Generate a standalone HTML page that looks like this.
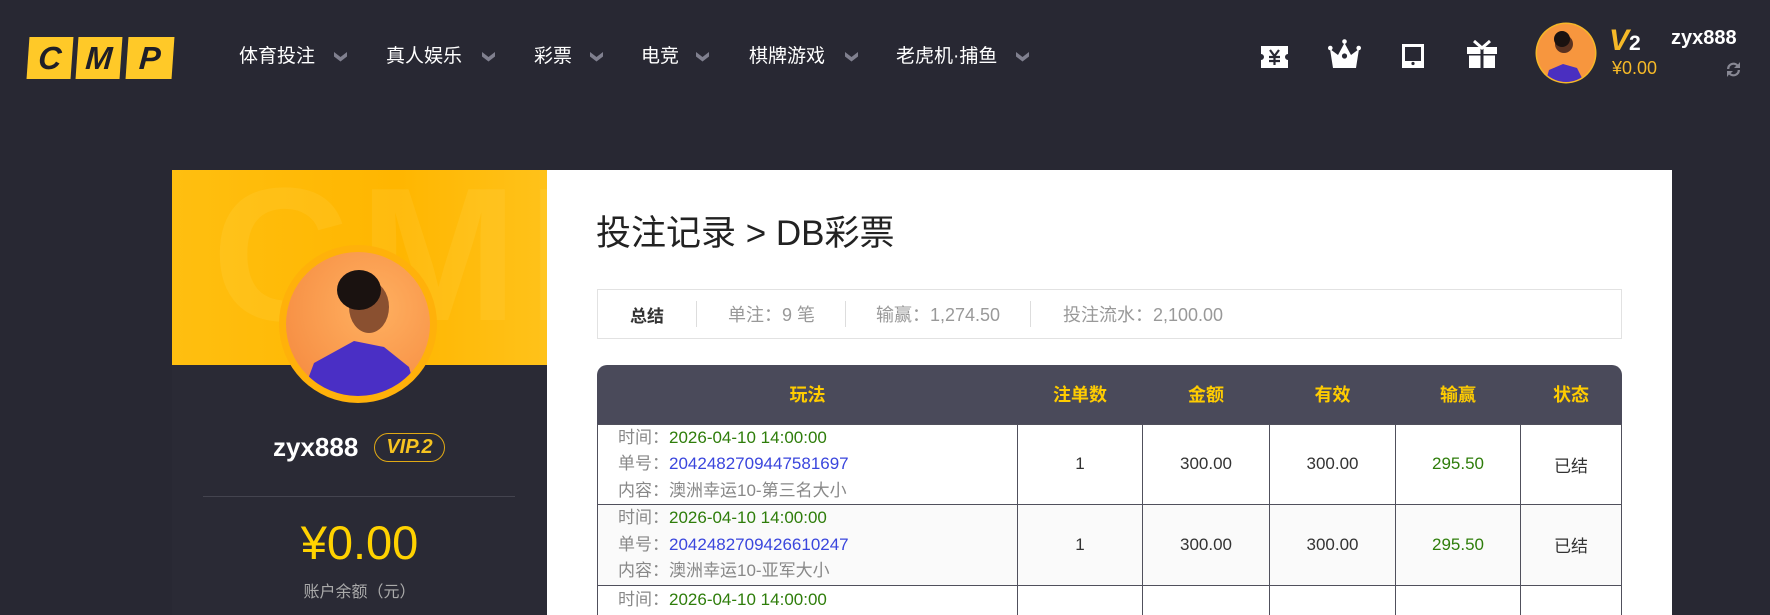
<!DOCTYPE html>
<html style="overflow:hidden"><head><meta charset="utf-8">
<style>
*{margin:0;padding:0;box-sizing:border-box}
html,body{width:1770px;height:615px;overflow:hidden}
body{background:#282833;font-family:"Liberation Sans","Noto Sans CJK SC",sans-serif}
#w{position:relative;width:1770px;height:615px;overflow:hidden}
.abs{position:absolute}
.logo .b{position:absolute;top:37px;height:42px;width:44px;background:#ffc928;transform:skewX(-4deg);color:#1e1e28;font:italic bold 32px/42px "Liberation Sans",sans-serif;text-align:center}
.nav{position:absolute;top:45px;color:#fff;font-size:19px;line-height:24px;white-space:nowrap}
.chev{position:absolute;top:52px;width:13px;height:10px}
.side{left:172px;top:170px;width:375px;height:445px;background:#2a2a35}
.banner{left:172px;top:170px;width:375px;height:195px;background:linear-gradient(90deg,#ffbf10,#ffb600 60%,#ffc21a);overflow:hidden}
.panel{left:547px;top:170px;width:1125px;height:445px;background:#fff}
#tw{position:absolute;left:597px;top:365px;width:1026px;height:250px;overflow:hidden}
table{border-collapse:collapse;width:1025px;font-size:17px}
th{color:#ffcc00;height:59px;font-weight:bold;font-size:18px}
td{border:1px solid #50505c;text-align:center;color:#333;height:80px;vertical-align:middle}
td.l{text-align:left;padding-left:20px;line-height:26.5px;color:#888}
.g{color:#2e7d0a}.bl{color:#3a46dd}
</style></head><body><div id="w">
<div class="logo"><div class="b" style="left:28px">C</div><div class="b" style="left:77px">M</div><div class="b" style="left:127px;width:46px">P</div></div>
<div class="nav" style="left:239px">体育投注</div>
<div class="nav" style="left:386px">真人娱乐</div>
<div class="nav" style="left:534px">彩票</div>
<div class="nav" style="left:641px">电竞</div>
<div class="nav" style="left:749px">棋牌游戏</div>
<div class="nav" style="left:896px">老虎机·捕鱼</div>
<svg class="chev" style="left:334px" viewBox="0 0 13 10"><path d="M0 0l6.5 5 6.5-5v4.5l-6.5 5-6.5-5z" fill="#80808f"/></svg>
<svg class="chev" style="left:482px" viewBox="0 0 13 10"><path d="M0 0l6.5 5 6.5-5v4.5l-6.5 5-6.5-5z" fill="#80808f"/></svg>
<svg class="chev" style="left:590px" viewBox="0 0 13 10"><path d="M0 0l6.5 5 6.5-5v4.5l-6.5 5-6.5-5z" fill="#80808f"/></svg>
<svg class="chev" style="left:696px" viewBox="0 0 13 10"><path d="M0 0l6.5 5 6.5-5v4.5l-6.5 5-6.5-5z" fill="#80808f"/></svg>
<svg class="chev" style="left:845px" viewBox="0 0 13 10"><path d="M0 0l6.5 5 6.5-5v4.5l-6.5 5-6.5-5z" fill="#80808f"/></svg>
<svg class="chev" style="left:1016px" viewBox="0 0 13 10"><path d="M0 0l6.5 5 6.5-5v4.5l-6.5 5-6.5-5z" fill="#80808f"/></svg>
<svg class="abs" style="left:1261px;top:46px" width="27" height="22" viewBox="0 0 27 22"><path d="M0 0h27v8a3 3 0 0 0 0 6v8H0v-8a3 3 0 0 0 0-6z" fill="#fff"/><path d="M9 4l4.5 6 4.5-6M8 11h11M8 15h11M13.5 10v9" stroke="#282833" stroke-width="2.2" fill="none"/></svg>
<svg class="abs" style="left:1328px;top:39px" width="33" height="29" viewBox="0 0 33 29"><circle cx="16.5" cy="2.5" r="2.3" fill="#fff"/><circle cx="2.3" cy="9" r="2.3" fill="#fff"/><circle cx="30.7" cy="9" r="2.3" fill="#fff"/><path d="M2 10l8 6 6.5-12 6.5 12 8-6-3 19H5z" fill="#fff"/><circle cx="16.5" cy="17" r="2.6" fill="#282833"/></svg>
<svg class="abs" style="left:1402px;top:44px" width="22" height="24" viewBox="0 0 22 24"><rect x="1.5" y="1.5" width="19" height="21" fill="none" stroke="#fff" stroke-width="3"/><rect x="1.5" y="17" width="19" height="6" fill="#fff"/><circle cx="11" cy="19.5" r="1.6" fill="#282833"/></svg>
<svg class="abs" style="left:1467px;top:40px" width="30" height="28" viewBox="0 0 30 28"><path d="M7 1l8 7 8-7" stroke="#fff" stroke-width="3" fill="none"/><rect x="0" y="7" width="13.5" height="7" fill="#fff"/><rect x="16.5" y="7" width="13.5" height="7" fill="#fff"/><rect x="2" y="15.5" width="11.5" height="12.5" fill="#fff"/><rect x="16.5" y="15.5" width="11.5" height="12.5" fill="#fff"/></svg>
<svg class="abs" style="left:1535px;top:22px" width="62" height="62" viewBox="0 0 62 62"><defs><clipPath id="c1"><circle cx="31" cy="31" r="29"/></clipPath></defs><circle cx="31" cy="31" r="30.5" fill="#f5b728"/><g clip-path="url(#c1)"><rect width="62" height="62" fill="#f7963e"/><circle cx="29" cy="22" r="9" fill="#5a3220"/><circle cx="27" cy="17" r="8" fill="#1a1210"/><path d="M10 62l4-14 14-6 14 4 8 16z" fill="#4a2fc0"/></g></svg>
<div class="abs" style="left:1609px;top:26px;color:#f6b928;font:bold 30px/30px 'Liberation Sans',sans-serif;font-style:italic">V<span style="color:#fff;font-size:21px;font-style:normal">2</span></div>
<div class="abs" style="left:1612px;top:58px;color:#f6b928;font-size:18px">¥0.00</div>
<div class="abs" style="left:1671px;top:27px;color:#fff;font:bold 20px 'Liberation Sans',sans-serif">zyx888</div>
<svg class="abs" style="left:1725px;top:61px" width="17" height="17" viewBox="0 0 17 17"><path d="M2 8a6.5 6.5 0 0 1 11-4.5L15 1v6H9l2.3-2.3A4.3 4.3 0 0 0 4.3 8zM15 9a6.5 6.5 0 0 1-11 4.5L2 16v-6h6l-2.3 2.3a4.3 4.3 0 0 0 7-3.3z" fill="#888894"/></svg>
<div class="abs side"></div>
<div class="abs banner"><div style="position:absolute;left:40px;top:-10px;font:bold 190px/190px 'Liberation Sans',sans-serif;color:rgba(255,230,120,0.12);letter-spacing:10px">CMP</div></div>
<svg class="abs" style="left:279px;top:245px" width="158" height="158" viewBox="0 0 158 158"><defs><clipPath id="c2"><circle cx="79" cy="79" r="72"/></clipPath><radialGradient id="rg" cx="0.6" cy="0.4" r="0.7"><stop offset="0" stop-color="#ffb060"/><stop offset="1" stop-color="#f58a40"/></radialGradient></defs><circle cx="79" cy="79" r="79" fill="#ffb10a"/><g clip-path="url(#c2)"><rect width="158" height="158" fill="url(#rg)"/><ellipse cx="90" cy="62" rx="20" ry="26" fill="#8a5030"/><ellipse cx="80" cy="45" rx="22" ry="20" fill="#1a1210"/><path d="M20 158l15-40 40-22 30 6 25 20 10 36z" fill="#4a2fc5"/></g></svg>
<div class="abs" style="left:273px;top:432px;color:#fff;font:bold 26px/30px 'Liberation Sans',sans-serif">zyx888</div>
<div class="abs" style="left:374px;top:433px;width:71px;height:29px;border:1.5px solid #e0a915;border-radius:15px;color:#f6c320;font:italic bold 20px/26px 'Liberation Sans',sans-serif;text-align:center">VIP.2</div>
<div class="abs" style="left:203px;top:496px;width:312px;height:1px;background:#44444f"></div>
<div class="abs" style="left:172px;width:375px;top:517px;text-align:center;color:#ffd200;font-size:47px;line-height:52px">¥0.00</div>
<div class="abs" style="left:172px;width:375px;top:578px;text-align:center;color:#aaa;font-size:16px">账户余额（元）</div>
<div class="abs panel"></div>
<div class="abs" style="left:596px;top:212px;font-size:35px;line-height:44px;color:#222">投注记录 &gt; DB彩票</div>
<div class="abs" style="left:597px;top:289px;width:1025px;height:50px;border:1px solid #e2e2e2"></div>
<div class="abs" style="left:630px;top:302px;font-size:17px;font-weight:bold;color:#333">总结</div>
<div class="abs" style="left:696px;top:301px;width:1px;height:26px;background:#ddd"></div>
<div class="abs" style="left:845px;top:301px;width:1px;height:26px;background:#ddd"></div>
<div class="abs" style="left:1030px;top:301px;width:1px;height:26px;background:#ddd"></div>
<div class="abs" style="left:728px;top:301px;font-size:18px;color:#999">单注：9 笔</div>
<div class="abs" style="left:876px;top:301px;font-size:18px;color:#999">输赢：1,274.50</div>
<div class="abs" style="left:1063px;top:301px;font-size:18px;color:#999">投注流水：2,100.00</div>
<div id="tw"><div style="position:absolute;left:0;top:0;width:1025px;height:59px;background:#4a4a5a;border-radius:10px 10px 0 0"></div>
<table style="position:relative">
<tr><th style="width:420px">玩法</th><th style="width:125px">注单数</th><th style="width:127px">金额</th><th style="width:126px">有效</th><th style="width:125px">输赢</th><th>状态</th></tr>
<tr><td class="l">时间：<span class="g">2026-04-10 14:00:00</span><br>单号：<span class="bl">2042482709447581697</span><br>内容：澳洲幸运10-第三名大小</td><td>1</td><td>300.00</td><td>300.00</td><td class="g">295.50</td><td>已结</td></tr>
<tr style="background:#fafafa"><td class="l">时间：<span class="g">2026-04-10 14:00:00</span><br>单号：<span class="bl">2042482709426610247</span><br>内容：澳洲幸运10-亚军大小</td><td>1</td><td>300.00</td><td>300.00</td><td class="g">295.50</td><td>已结</td></tr>
<tr><td class="l" style="vertical-align:top;padding-top:1px">时间：<span class="g">2026-04-10 14:00:00</span></td><td></td><td></td><td></td><td></td><td></td></tr>
</table></div>
</div></body></html>
